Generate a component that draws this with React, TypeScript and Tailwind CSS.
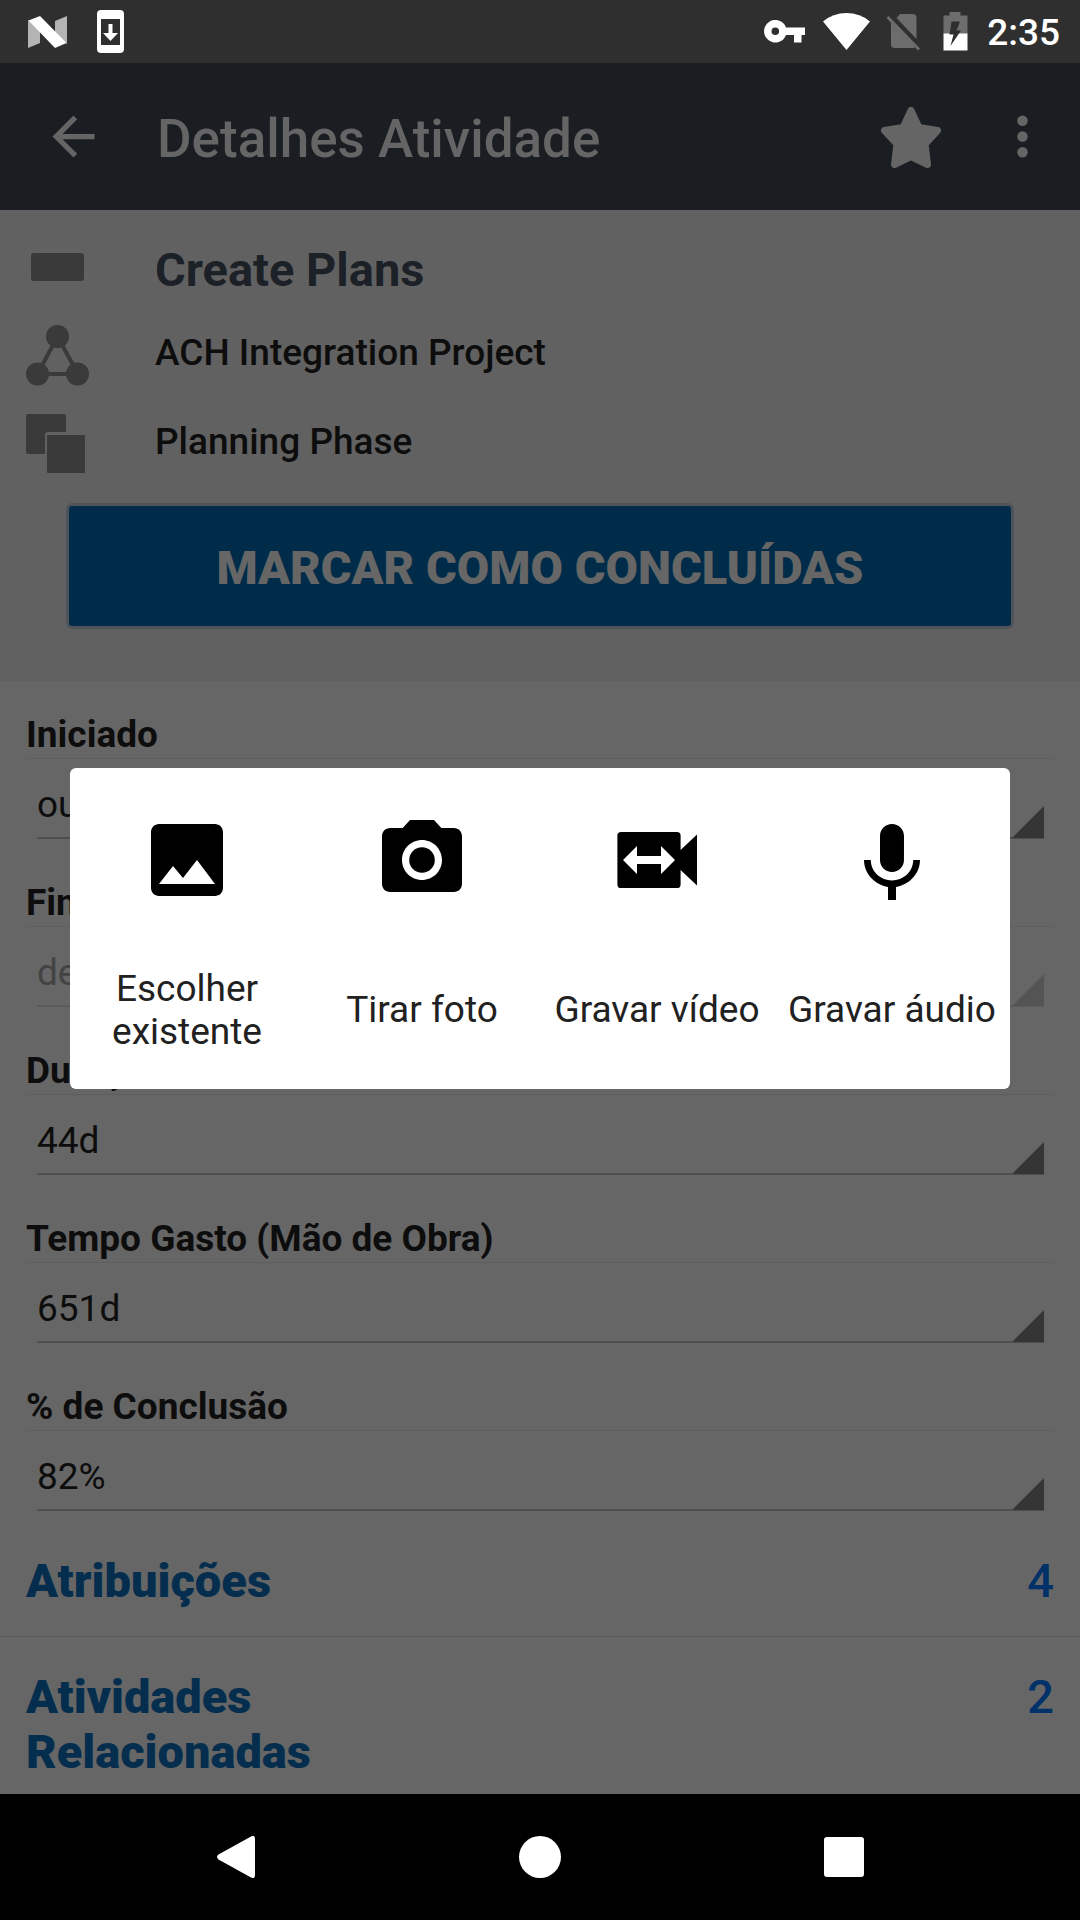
import React from "react";

type Field = { id: string; label: string; value: string; disabled?: boolean };

const fields: Field[] = [
  { id: "iniciado", label: "Iniciado", value: "out" },
  { id: "finalizado", label: "Finalizado", value: "dez", disabled: true },
  { id: "duracao", label: "Duração", value: "44d" },
  { id: "tempo", label: "Tempo Gasto (Mão de Obra)", value: "651d" },
  { id: "conclusao", label: "% de Conclusão", value: "82%" },
];

const related = [
  { title: "Atribuições", count: 4 },
  { title: "Atividades Relacionadas", count: 2 },
];

function StatusBar() {
  return (
    <div className="flex h-[63px] items-center justify-between bg-[#2f2f2f] pr-5 pl-7 text-white">
      <div className="flex items-center gap-[29px]">
        <svg width="40" height="32" viewBox="0 0 40 32" aria-label="Android N">
          <path d="M0 4L12 12V27L0 32Z" fill="#b4b4b4" />
          <path d="M27 5L39 0V28L27 18Z" fill="#b4b4b4" />
          <path d="M0.500 4.500L12 0L38.500 27L27 32Z" fill="#fff" />
        </svg>
        <svg width="28" height="44" viewBox="0 0 28 44" aria-label="Atualização">
          <path
            fill="#fff"
            fillRule="evenodd"
            d="M4 0H23A4 4 0 0 1 27 4V39A4 4 0 0 1 23 43H4A4 4 0 0 1 0 39V4A4 4 0 0 1 4 0ZM4 9V35H23V9Z"
          />
          <path fill="#fff" d="M11.500 14H15.500V23H21L13.500 31L6 23H11.500Z" />
        </svg>
      </div>
      <div className="flex items-center">
        <svg className="mr-[17px]" width="42" height="23" viewBox="0 0 42 23" aria-label="VPN">
          <path
            fill="#fff"
            fillRule="evenodd"
            d="M22 7.500A11.300 11.300 0 1 0 22 15H30V22.500H37.500V15H41V7.500ZM11.300 7.500A3.800 3.800 0 1 1 11.300 15.100A3.800 3.800 0 1 1 11.300 7.500Z"
          />
        </svg>
        <svg className="mr-4" width="47" height="37" viewBox="0 0 47 37" aria-label="Wi-Fi">
          <path fill="#fff" d="M0 8.500Q10 0 23.500 0T47 8.500L23.500 37Z" />
        </svg>
        <svg className="mr-[22px]" width="35" height="38" viewBox="0 0 35 38" aria-label="Sem SIM">
          <path
            fill="#6d6d6d"
            d="M14 1H27A3.500 3.500 0 0 1 30.500 4.500V26L10.500 5ZM5 9.500L29 34Q28.300 35 27 35H8.500A3.500 3.500 0 0 1 5 31.500Z"
          />
          <path stroke="#6d6d6d" strokeWidth="2.800" d="M1.500 4L33 36.500" />
        </svg>
        <svg className="mr-[19px]" width="25" height="39" viewBox="0 0 25 39" aria-label="Bateria">
          <path fill="#6d6d6d" d="M6.500 0H17.500V3.500H24.500V22H0.500V3.500H6.500Z" />
          <path fill="#fff" d="M0.500 21.500H24.500V38.500H0.500Z" />
          <path fill="#2f2f2f" d="M8.500 9.500H17L13.500 18.500H18L7.500 34L10.500 22.500H6.500Z" />
        </svg>
        <span className="pt-0.5 text-[37px] leading-[43px] font-medium">2:35</span>
      </div>
    </div>
  );
}

function TopBar() {
  return (
    <header className="flex h-[147px] items-center bg-[#1a1d22] pr-[26px] pl-[42px] text-[#656565]">
      <button type="button" aria-label="Voltar">
        <svg width="63" height="63" viewBox="0 0 24 24" fill="currentColor">
          <path d="M20 11H7.830l5.590-5.590L12 4l-8 8 8 8 1.410-1.410L7.830 13H20v-2z" />
        </svg>
      </button>
      <h1 className="ml-[52px] flex-1 pt-1 text-[53px] leading-[62px] font-medium">
        Detalhes Atividade
      </h1>
      <button type="button" aria-label="Favorito" className="mr-[49px]">
        <svg
          width="62"
          height="64"
          viewBox="0 0 62 64"
          fill="currentColor"
          stroke="currentColor"
          strokeWidth="7"
          strokeLinejoin="round"
        >
          <path d="M31 5.500L39 22.500L57.500 25.500L45 39L47.500 59.500L31 51.500L14.500 59.500L17 39L4.500 25.500L23 22.500Z" />
        </svg>
      </button>
      <button type="button" aria-label="Mais opções">
        <svg width="63" height="63" viewBox="0 0 24 24" fill="currentColor">
          <circle cx="12" cy="6" r="2" />
          <circle cx="12" cy="12" r="2" />
          <circle cx="12" cy="18" r="2" />
        </svg>
      </button>
    </header>
  );
}

function Summary() {
  return (
    <section className="bg-[#616161] pt-[21px] pb-[52px]">
      <div className="px-[26px]">
        <div className="flex h-[77px] items-center gap-[62px]">
          <svg width="67" height="67" viewBox="0 0 67 67" fill="#3a3a3a">
            <rect x="5" y="17" width="53" height="28" rx="3" />
          </svg>
          <h2 className="text-[47px] leading-[55px] font-bold text-[#1c2128]">Create Plans</h2>
        </div>
        <div className="flex h-[89px] items-center gap-[62px]">
          <svg width="67" height="67" viewBox="0 0 67 67" fill="#3a3a3a">
            <path d="M31.500 17.500L11.500 55H52Z" fill="none" stroke="#3a3a3a" strokeWidth="4" />
            <circle cx="31.500" cy="17.500" r="11.500" />
            <circle cx="11.500" cy="55" r="11.500" />
            <circle cx="51.500" cy="55" r="11.500" />
          </svg>
          <p className="text-[37px] leading-[43px] font-medium text-[#0d0d0d]">
            ACH Integration Project
          </p>
        </div>
        <div className="flex h-[89px] items-center gap-[62px]">
          <svg width="67" height="67" viewBox="0 0 67 67" fill="#3a3a3a">
            <path d="M2 6H38A2 2 0 0 1 40 8V24H22A3 3 0 0 0 19 27V46H2A2 2 0 0 1 0 44V8A2 2 0 0 1 2 6Z" />
            <rect x="21" y="27" width="38" height="38" rx="1" />
          </svg>
          <p className="text-[37px] leading-[43px] font-medium text-[#0d0d0d]">Planning Phase</p>
        </div>
      </div>
      <div className="mt-[17px] px-[66px]">
        <button
          type="button"
          className="h-[126px] w-full rounded-md border-3 border-[#50545a] bg-[#002c49] pt-0.5 text-[47px] leading-[55px] font-black text-[#666666]"
        >
          MARCAR COMO CONCLUÍDAS
        </button>
      </div>
    </section>
  );
}

function FieldRow({ field }: { field: Field }) {
  return (
    <div className="px-[26px] pt-8">
      <label
        htmlFor={field.id}
        className="block border-b border-[#5e5e5e] pb-0.5 text-[37px] leading-[43px] font-bold text-[#0d0d0d]"
      >
        {field.label}
      </label>
      <div className="relative mr-2.5 ml-[11px]">
        <select
          id={field.id}
          disabled={field.disabled}
          className="block h-20 w-full appearance-none border-b-2 border-[#4f4f4f] pt-[13px] text-[37px] leading-[43px] text-[#0d0d0d] disabled:border-[#5b5b5b] disabled:text-[#434343] disabled:opacity-100"
        >
          <option>{field.value}</option>
        </select>
        <svg
          className={
            field.disabled
              ? "pointer-events-none absolute right-0 bottom-px text-[#545454]"
              : "pointer-events-none absolute right-0 bottom-px text-[#353535]"
          }
          width="32"
          height="32"
          viewBox="0 0 32 32"
          fill="currentColor"
        >
          <path d="M32 0V32H0Z" />
        </svg>
      </div>
    </div>
  );
}

const actions = [
  {
    label: "Escolher existente",
    path: "M21 19V5c0-1.100-.9-2-2-2H5c-1.100 0-2 .9-2 2v14c0 1.100.9 2 2 2h14c1.100 0 2-.9 2-2zM8.500 13.500l2.500 3.010L14.500 12l4.500 6H5l3.500-4.500z",
  },
  {
    label: "Tirar foto",
    path: "M12 8.800a3.200 3.200 0 1 0 0 6.400a3.200 3.200 0 1 0 0-6.400zM9 2L7.170 4H4c-1.100 0-2 .9-2 2v12c0 1.100.9 2 2 2h16c1.100 0 2-.9 2-2V6c0-1.100-.9-2-2-2h-3.170L15 2H9zm3 15c-2.760 0-5-2.240-5-5s2.240-5 5-5 5 2.240 5 5-2.240 5-5 5z",
  },
  {
    label: "Gravar vídeo",
    path: "M3 5H17a.9.9 0 0 1 .9.900V9.500L22 5.600V18.400L17.900 14.500V18.100a.9.9 0 0 1-.9.900H3a.9.9 0 0 1-.9-.900V5.900A.9.9 0 0 1 3 5ZM7 15.500V13H13V15.500L16.500 12L13 8.500V11H7V8.500L3.500 12Z",
  },
  {
    label: "Gravar áudio",
    path: "M12 15c1.660 0 2.990-1.340 2.990-3L15 6c0-1.660-1.340-3-3-3S9 4.340 9 6v6c0 1.660 1.340 3 3 3zm5.300-3c0 3-2.540 5.100-5.300 5.100S6.700 15 6.700 12H5c0 3.410 2.720 6.230 6 6.720V22h2v-3.280c3.280-.48 6-3.300 6-6.720h-1.700z",
  },
];

function MediaDialog() {
  return (
    <div className="absolute inset-0 flex items-center px-[70px]">
      <div
        role="dialog"
        aria-label="Adicionar mídia"
        className="grid w-full grid-cols-4 rounded-md bg-white pt-11 pb-9"
      >
        {actions.map((action) => (
          <button
            key={action.label}
            type="button"
            className="flex flex-col items-center gap-[58px] pr-px text-[#212121]"
          >
            <svg width="96" height="96" viewBox="0 0 24 24" fill="#000" fillRule="evenodd">
              <path d={action.path} />
            </svg>
            <span className="flex h-[87px] items-center px-2 text-center text-[37px] leading-[43px]">
              {action.label}
            </span>
          </button>
        ))}
      </div>
    </div>
  );
}

function NavBar() {
  return (
    <nav className="grid h-[126px] grid-cols-3 bg-black px-[84px] text-white">
      <button type="button" aria-label="Voltar" className="flex items-center justify-center">
        <svg width="38" height="42" viewBox="0 0 38 42" fill="#fff">
          <path d="M34 .5Q38-1.500 38 3V39Q38 43.500 34 41.500L1.500 23.500Q-1.500 21 1.500 18.500Z" />
        </svg>
      </button>
      <button type="button" aria-label="Início" className="flex items-center justify-center">
        <span className="size-[42px] rounded-full bg-white" />
      </button>
      <button type="button" aria-label="Recentes" className="flex items-center justify-center">
        <span className="size-10 rounded-[3px] bg-white" />
      </button>
    </nav>
  );
}

export default function App() {
  return (
    <div className="flex min-h-screen flex-col bg-black font-['Roboto',sans-serif]">
      <StatusBar />
      <div className="relative flex flex-1 flex-col bg-[#666666]">
        <TopBar />
        <main className="flex-1">
          <Summary />
          <form className="flex flex-col gap-[10px]">
            {fields.map((field) => (
              <FieldRow key={field.id} field={field} />
            ))}
          </form>
          <ul className="mt-[10px]">
            {related.map((item) => (
              <li key={item.title} className="border-b border-[#595959] last:border-b-0">
                <a
                  href="#"
                  className="flex justify-between px-[26px] pt-8 pb-7 text-[47px] leading-[55px] in-[li:last-child]:pb-[15px]"
                >
                  <span className="w-2/5 font-black text-[#052e4e]">{item.title}</span>
                  <span className="font-medium text-[#003169]">{item.count}</span>
                </a>
              </li>
            ))}
          </ul>
        </main>
        <MediaDialog />
      </div>
      <NavBar />
    </div>
  );
}
